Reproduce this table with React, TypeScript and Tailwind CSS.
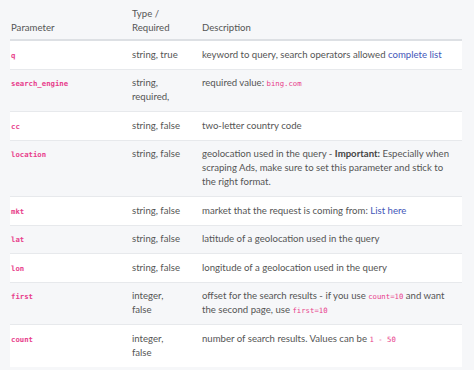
import React from 'react'

const code = 'font-["DejaVu_Sans_Mono",monospace] text-[7.3px] leading-none text-[#e83e8c]'

function C({ children }: { children: React.ReactNode }) {
  return <code className={code}>{children}</code>
}

function A({ children }: { children: React.ReactNode }) {
  return <a className="text-[#4356b8]">{children}</a>
}

interface Row {
  name: string
  type: React.ReactNode
  desc: React.ReactNode
}

const rows: Row[] = [
  { name: 'q', type: 'string, true', desc: <>keyword to query, search operators allowed <A>complete list</A></> },
  { name: 'search_engine', type: 'string, required,', desc: <>required value: <C>bing.com</C></> },
  { name: 'cc', type: 'string, false', desc: 'two-letter country code' },
  {
    name: 'location',
    type: 'string, false',
    desc: (
      <>
        geolocation used in the query - <b className="font-bold text-[#444]">Important:</b> Especially when scraping Ads,
        make sure to set this parameter and stick to the right format.
      </>
    ),
  },
  { name: 'mkt', type: 'string, false', desc: <>market that the request is coming from: <A>List here</A></> },
  { name: 'lat', type: 'string, false', desc: 'latitude of a geolocation used in the query' },
  { name: 'lon', type: 'string, false', desc: 'longitude of a geolocation used in the query' },
  {
    name: 'first',
    type: 'integer, false',
    desc: <>offset for the search results - if you use <C>count=10</C> and want the second page, use <C>first=10</C></>,
  },
  { name: 'count', type: 'integer, false', desc: <>number of search results. Values can be <C>1 - 50</C></> },
]

export default function App() {
  return (
    <div className='min-h-screen bg-[#f6f7f9] pl-[10px] pr-[12px] font-["Lato",sans-serif] text-[9.6px] leading-[14px] text-[#555]'>
      <div className="grid grid-cols-[116px_70px_1fr]">
        <div className="pl-[1px] pt-[21px] pb-[4px] border-b-2 border-[#dde0e4]">Parameter</div>
        <div className="pl-[6px] pr-[16px] pt-[7px] pb-[4px] border-b-2 border-[#dde0e4]">Type / Required</div>
        <div className="pl-[6px] pt-[21px] pb-[4px] border-b-2 border-[#dde0e4]">Description</div>
        {rows.map((r, i) => {
          const bg = i % 2 === 0 ? 'bg-white' : 'bg-[#f6f7f9]'
          const border = i < rows.length - 1 ? 'border-b border-[#e7e9ec]' : ''
          return (
            <React.Fragment key={r.name}>
              <div className={`${bg} ${border} pl-[1px] py-[6.75px]`}>
                <code className={`${code} font-semibold`}>{r.name}</code>
              </div>
              <div className={`${bg} ${border} pl-[6px] pr-[16px] py-[6.75px]`}>{r.type}</div>
              <div className={`${bg} ${border} pl-[6px] pr-[7px] py-[6.75px]`}>{r.desc}</div>
            </React.Fragment>
          )
        })}
      </div>
    </div>
  )
}
